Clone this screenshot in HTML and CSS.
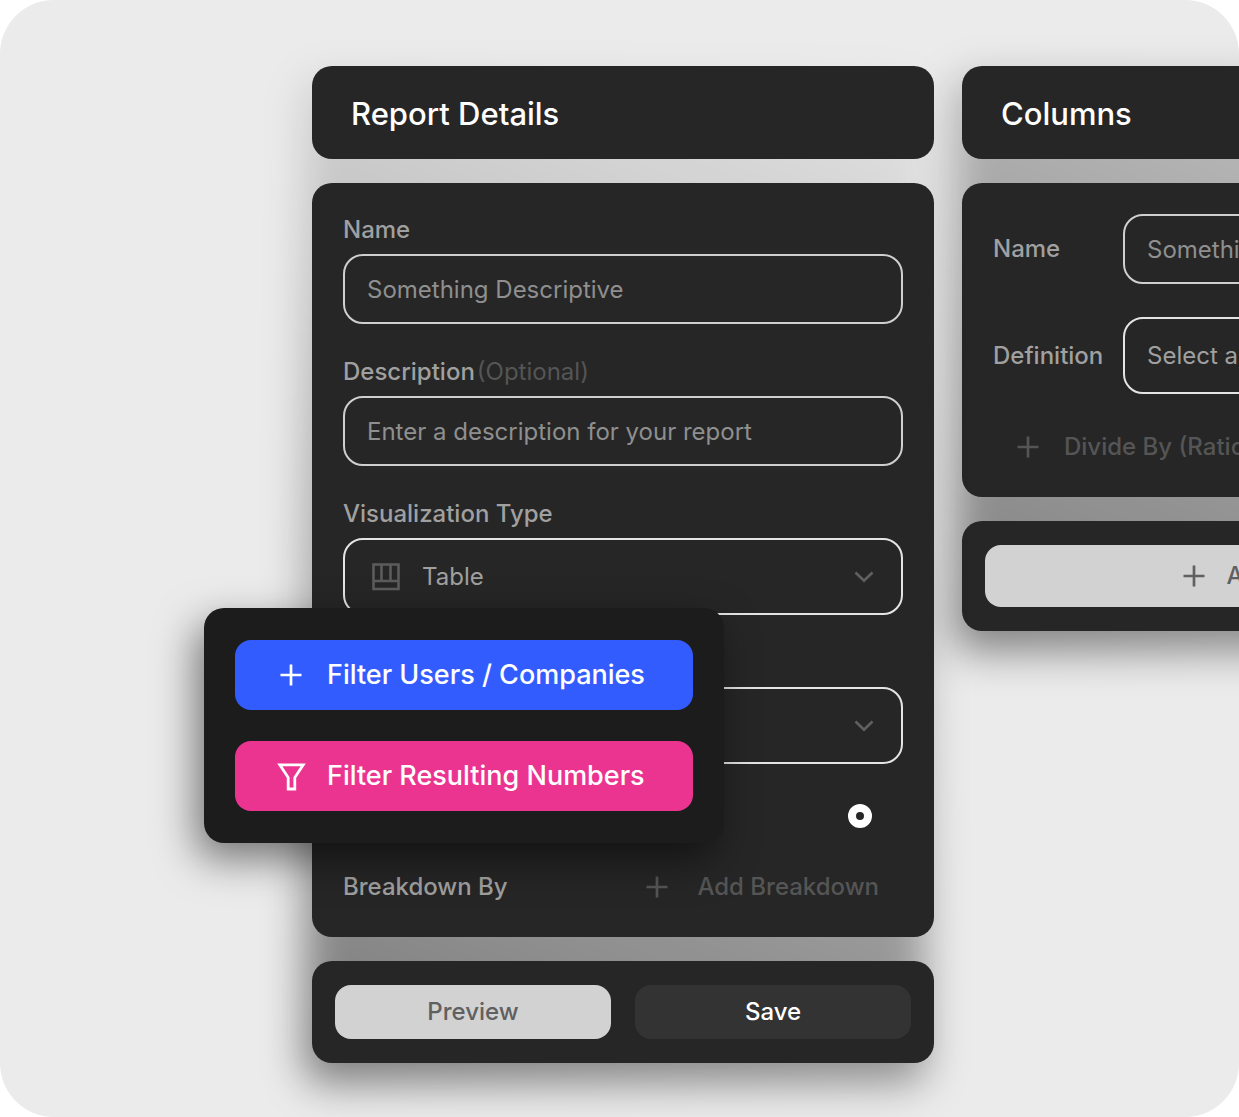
FILE: index.html
```html
<!DOCTYPE html>
<html lang="en">
<head>
  <meta charset="UTF-8">
  <meta name="viewport" content="width=device-width, initial-scale=1.0">
  <title>Report Details</title>
  <link rel="stylesheet" href="styles.css">
</head>
<body>
  <!-- shared icons -->
  <svg class="sprite" aria-hidden="true">
    <symbol id="plus" viewBox="0 0 32 32">
      <path d="M16 5.500v21M5.500 16h21" fill="none" stroke="currentColor" stroke-width="2.700"/>
    </symbol>
    <symbol id="funnel" viewBox="0 0 32 32">
      <path d="M4.800 4.800H28.200L19.800 17.600V29H13.200V17.600Z" fill="none" stroke="currentColor" stroke-width="2.800"/>
    </symbol>
    <symbol id="chevron" viewBox="0 0 20 12">
      <path d="M1.500 1.500L10 9.800L18.500 1.500" fill="none" stroke="currentColor" stroke-width="2.600"/>
    </symbol>
    <symbol id="table" viewBox="0 0 32 32">
      <path d="M3.500 3.500H28.500V28H3.500ZM3.500 20H28.500M11.500 3.500V20M20.500 3.500V20" fill="none" stroke="currentColor" stroke-width="2.600"/>
    </symbol>
  </svg>

  <main class="canvas">
    <section class="column report">
      <div class="card title-card">
        <h1>Report Details</h1>
      </div>

      <form class="card form-card">
        <div class="field">
          <label for="name">Name</label>
          <input class="box" type="text" id="name" placeholder="Something Descriptive">
        </div>
        <div class="field">
          <label for="description">Description<span class="optional">(Optional)</span></label>
          <input class="box" type="text" id="description" placeholder="Enter a description for your report">
        </div>
        <div class="field">
          <label for="type">Visualization Type</label>
          <div class="box select">
            <svg class="icon"><use href="#table"/></svg>
            <select id="type">
              <option>Table</option>
            </select>
            <svg class="chevron"><use href="#chevron"/></svg>
          </div>
        </div>
        <div class="field">
          <label for="range"></label>
          <div class="box select">
            <select id="range" aria-label="Range"></select>
            <svg class="chevron"><use href="#chevron"/></svg>
          </div>
        </div>
        <div class="row row-end">
          <input type="radio" aria-label="Enabled" checked>
        </div>
        <div class="row">
          <span>Breakdown By</span>
          <button type="button" class="ghost add-breakdown">
            <svg class="icon"><use href="#plus"/></svg>
            Add Breakdown
          </button>
        </div>
      </form>

      <div class="card actions">
        <button type="button" class="btn light">Preview</button>
        <button type="button" class="btn dark">Save</button>
      </div>

      <div class="popup">
        <button type="button" class="filter blue">
          <svg class="icon"><use href="#plus"/></svg>
          Filter Users / Companies
        </button>
        <button type="button" class="filter pink">
          <svg class="icon"><use href="#funnel"/></svg>
          Filter Resulting Numbers
        </button>
      </div>
    </section>

    <section class="column columns">
      <div class="card title-card">
        <h2>Columns</h2>
      </div>

      <form class="card form-card form-inline">
        <div class="field-inline">
          <label for="column-name">Name</label>
          <input class="box" type="text" id="column-name" placeholder="Something Descriptive">
        </div>
        <div class="field-inline">
          <label for="definition">Definition</label>
          <div class="box select">
            <select id="definition">
              <option>Select an Event</option>
            </select>
            <svg class="chevron"><use href="#chevron"/></svg>
          </div>
        </div>
        <div class="row">
          <button type="button" class="ghost divide">
            <svg class="icon"><use href="#plus"/></svg>
            Divide By (Ratio)
          </button>
        </div>
      </form>

      <div class="card actions">
        <button type="button" class="btn light tall">
          <svg class="icon"><use href="#plus"/></svg>
          Add Column
        </button>
      </div>
    </section>
  </main>
</body>
</html>
```

FILE: styles.css
```css
* {
  box-sizing: border-box;
}

body {
  margin: 0;
  background: #fff;
  font-family: Inter, "Liberation Sans", sans-serif;
  font-size: 24px;
  line-height: 32px;
  font-weight: 500;
  color: #a0a0a0;
}

button, input, select {
  font: inherit;
  color: inherit;
}

button {
  border: 0;
  cursor: pointer;
  white-space: nowrap;
}

.sprite {
  position: absolute;
  width: 0;
  height: 0;
}

.canvas {
  display: flex;
  align-items: flex-start;
  gap: 28px;
  min-height: 100vh;
  padding: 66px 0 54px 312px;
  background: #ebebeb;
  border-radius: 54px;
  overflow: hidden;
}

.column {
  position: relative;
  z-index: 0;
  display: flex;
  flex-direction: column;
  gap: 24px;
  flex: 0 0 calc(100% - 305px);
}

/* one soft shadow behind the whole column, heavier at the bottom left */
.column::before {
  content: "";
  position: absolute;
  z-index: -1;
  inset: 12px 8px -20px -8px;
  border-radius: 20px;
  background: linear-gradient(200deg, rgba(0, 0, 0, 0.03), rgba(0, 0, 0, 0.48));
  filter: blur(20px);
}

.columns::before {
  background: linear-gradient(200deg, rgba(0, 0, 0, 0.16), rgba(0, 0, 0, 0.46));
}

.report {
  z-index: 1;
}

/* cards */
.card {
  background: #262626;
  border-radius: 20px;
}

.title-card {
  padding: 28px 39px 25px;
}

h1, h2 {
  margin: 0;
  font-size: 31px;
  line-height: 40px;
  font-weight: 500;
  color: #fff;
}

.form-card {
  display: flex;
  flex-direction: column;
  gap: 32px;
  padding: 31px;
}

.form-inline {
  gap: 33px;
}

.field {
  display: flex;
  flex-direction: column;
  gap: 8px;
}

.field label {
  min-height: 32px;
}

.field-inline {
  display: flex;
  align-items: center;
}

.field-inline label {
  flex: 0 0 130px;
}

.field-inline .box {
  flex: 1;
  min-width: 0;
}

.optional {
  margin-left: 2px;
  color: #555;
  font-weight: 400;
}

/* inputs */
.box {
  width: 100%;
  height: 70px;
  padding: 0 22px;
  border: 2px solid #cfcfcf;
  border-radius: 20px;
  background: transparent;
  font-weight: 400;
}

.box::placeholder {
  color: #8f8f8f;
  opacity: 1;
}

.select {
  display: flex;
  align-items: center;
  gap: 20px;
  height: 77px;
  padding: 0 27px 0 25px;
  border-color: #e4e4e4;
}

.select select {
  flex: 1;
  min-width: 0;
  padding: 0;
  border: 0;
  appearance: none;
  background: transparent;
}

.field-inline .select {
  padding-left: 22px;
}

.icon {
  width: 32px;
  height: 32px;
  flex: none;
}

.chevron {
  width: 20px;
  height: 12px;
  flex: none;
  color: #606060;
}

.select .icon {
  color: #5c5c5c;
}

input[type="radio"] {
  appearance: none;
  width: 24px;
  height: 24px;
  margin: 0 31px 0 0;
  border: 8px solid #fff;
  border-radius: 50%;
}

.row {
  display: flex;
  align-items: center;
  justify-content: space-between;
  height: 39px;
}

.row-end {
  justify-content: flex-end;
}

/* buttons */
.ghost, .filter, .btn {
  display: flex;
  align-items: center;
}

.ghost {
  gap: 24px;
  padding: 0 24px;
  background: transparent;
  color: #555;
}

.divide {
  gap: 20px;
  padding: 0 19px;
}

.actions {
  display: flex;
  gap: 24px;
  padding: 24px 23px;
}

.btn {
  flex: 1;
  justify-content: center;
  gap: 16px;
  height: 54px;
  border-radius: 16px;
}

.tall {
  height: 62px;
}

.light {
  background: #d2d2d2;
  color: #606060;
}

.dark {
  background: #333;
  color: #fff;
}

/* filter popup over the report form */
.popup {
  position: absolute;
  top: 542px;
  left: -108px;
  width: 520px;
  display: flex;
  flex-direction: column;
  gap: 31px;
  padding: 32px 31px;
  background: #1c1c1c;
  border-radius: 20px;
  box-shadow: -8px 16px 40px rgba(0, 0, 0, 0.5);
}

.filter {
  gap: 20px;
  height: 70px;
  padding: 0 40px;
  border-radius: 16px;
  font-size: 27px;
  color: #fff;
}

.blue {
  background: #335cff;
}

.pink {
  background: #eb348f;
}
```
